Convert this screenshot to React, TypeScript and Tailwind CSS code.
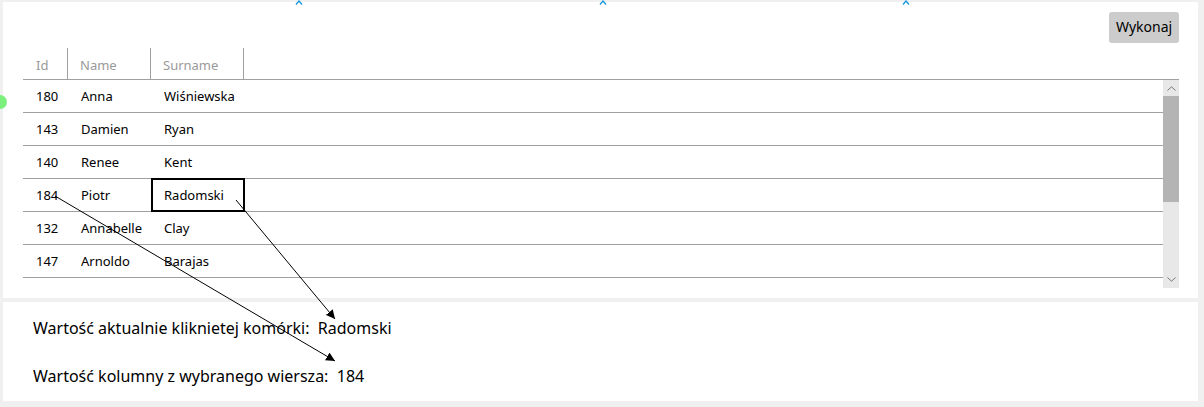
import React from 'react';

const rows = [
  { id: 180, name: 'Anna', surname: 'Wiśniewska' },
  { id: 143, name: 'Damien', surname: 'Ryan' },
  { id: 140, name: 'Renee', surname: 'Kent' },
  { id: 184, name: 'Piotr', surname: 'Radomski' },
  { id: 132, name: 'Annabelle', surname: 'Clay' },
  { id: 147, name: 'Arnoldo', surname: 'Barajas' },
];

const selectedRow = 3;

function Caret({ x }: { x: number }) {
  return (
    <svg className="absolute top-0" style={{ left: x - 4 }} width="8" height="5" viewBox="0 0 8 5">
      <polyline points="1,4.5 4,1 7,4.5" fill="none" stroke="#1e9be0" strokeWidth="1.4" />
    </svg>
  );
}

export default function App() {
  return (
    <div
      className="relative w-[1204px] h-[407px] bg-[#f0f0f0] overflow-hidden pt-[2px] pl-[3px] text-black"
      style={{ fontFamily: '"Noto Sans", "Open Sans", sans-serif' }}
    >
      {/* top panel */}
      <div className="w-[1195px] h-[296px] bg-white flex flex-col">
        <div className="flex justify-end pt-[10px] pr-[19px]">
          <button className="w-[70px] h-[31px] bg-[#cccccc] rounded-[3px] text-[14px] leading-none pb-[2px]">
            Wykonaj
          </button>
        </div>

        <div className="ml-[20px] mt-[5px] w-[1156px] flex flex-col">
          {/* header */}
          <div className="flex h-[32px] border-b border-[#a0a0a0] text-[13px] text-[#9a9a9a]">
            <div className="w-[45px] border-r border-[#a0a0a0] pl-[13px] pt-[4px] flex items-center">Id</div>
            <div className="w-[83px] border-r border-[#a0a0a0] pl-[12px] pt-[4px] flex items-center">Name</div>
            <div className="w-[93px] border-r border-[#a0a0a0] pl-[12px] pt-[4px] flex items-center">Surname</div>
          </div>

          {/* body */}
          <div className="flex h-[208px] overflow-hidden">
            <div className="w-[1140px] flex flex-col text-[13px]">
              {rows.map((r, i) => (
                <div key={r.id} className="flex shrink-0 h-[33px] border-b border-[#a0a0a0]">
                  <div className="w-[45px] pl-[13px] pt-[2px] flex items-center">{r.id}</div>
                  <div className="w-[83px] pl-[13px] pt-[2px] flex items-center">{r.name}</div>
                  <div className="relative w-[94px] pl-[13px] pt-[2px] flex items-center">
                    {r.surname}
                    {i === selectedRow && (
                      <div className="absolute left-0 right-0 top-[-1px] bottom-[-1px] border-2 border-black" />
                    )}
                  </div>
                </div>
              ))}
            </div>

            {/* scrollbar */}
            <div className="w-[16px] h-[208px] bg-[#e8e8e8] flex flex-col items-center">
              <div className="h-[16px] flex items-center justify-center">
                <svg width="9" height="5" viewBox="0 0 9 5">
                  <polyline points="0.5,4.5 4.5,0.8 8.5,4.5" fill="none" stroke="#777" strokeWidth="1" />
                </svg>
              </div>
              <div className="w-[16px] h-[106px] bg-[#b4b4b4]" />
              <div className="flex-1" />
              <div className="h-[18px] flex items-center justify-center">
                <svg width="9" height="5" viewBox="0 0 9 5">
                  <polyline points="0.5,0.5 4.5,4.2 8.5,0.5" fill="none" stroke="#777" strokeWidth="1" />
                </svg>
              </div>
            </div>
          </div>
        </div>
      </div>

      {/* bottom panel */}
      <div className="mt-[4px] w-[1195px] h-[99px] bg-white flex flex-col pl-[30px] pt-[14px] gap-[24px] text-[16px]">
        <div className="h-[24px] flex items-center">Wartość aktualnie kliknietej komórki:&nbsp;&nbsp;Radomski</div>
        <div className="h-[24px] flex items-center">Wartość kolumny z wybranego wiersza:&nbsp;&nbsp;184</div>
      </div>

      {/* overlays */}
      <div className="absolute left-[-7px] top-[95px] w-[14px] h-[14px] rounded-full bg-[#7cf07c]" />
      <Caret x={299} />
      <Caret x={603} />
      <Caret x={906} />

      <svg className="absolute left-0 top-0 pointer-events-none" width="1204" height="407">
        <defs>
          <marker id="ah" viewBox="0 0 10 10" refX="10" refY="5" markerWidth="9" markerHeight="9" orient="auto-start-reverse" markerUnits="userSpaceOnUse">
            <path d="M0,0 L10,5 L0,10 z" fill="#000" />
          </marker>
        </defs>
        <line x1="236" y1="200" x2="335" y2="319" stroke="#000" strokeWidth="1" markerEnd="url(#ah)" />
        <line x1="55" y1="196" x2="335" y2="361" stroke="#000" strokeWidth="1" markerEnd="url(#ah)" />
      </svg>
    </div>
  );
}
